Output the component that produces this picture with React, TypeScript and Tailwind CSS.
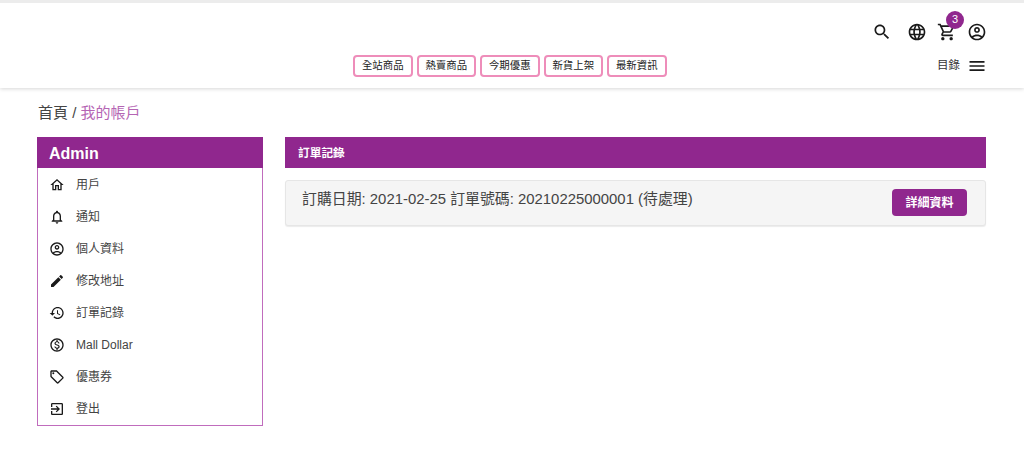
import React from "react";

type IconProps = { d: string; size: number; extra?: React.ReactNode; className?: string };

function Icon({ d, size, extra, className }: IconProps) {
  return (
    <svg width={size} height={size} viewBox="0 0 24 24" fill="#1a1a1a" className={className}>
      <path d={d} />
      {extra}
    </svg>
  );
}

const icons = {
  search: "M15.5 14h-.79l-.28-.27C15.41 12.59 16 11.11 16 9.5 16 5.91 13.09 3 9.5 3S3 5.91 3 9.5 5.91 16 9.5 16c1.61 0 3.09-.59 4.23-1.57l.27.28v.79l5 4.99L20.49 19l-4.99-5zm-6 0C7.01 14 5 11.99 5 9.5S7.01 5 9.5 5 14 7.01 14 9.5 11.99 14 9.5 14z",
  language: "M11.99 2C6.47 2 2 6.48 2 12s4.47 10 9.99 10C17.52 22 22 17.52 22 12S17.52 2 11.99 2zm6.93 6h-2.95c-.32-1.25-.78-2.45-1.38-3.56 1.84.63 3.37 1.91 4.33 3.56zM12 4.04c.83 1.2 1.48 2.53 1.91 3.96h-3.82c.43-1.43 1.08-2.76 1.91-3.96zM4.26 14C4.1 13.36 4 12.69 4 12s.1-1.36.26-2h3.38c-.08.66-.14 1.32-.14 2 0 .68.06 1.34.14 2H4.26zm.82 2h2.95c.32 1.25.78 2.45 1.38 3.56-1.84-.63-3.37-1.9-4.33-3.56zm2.95-8H5.08c.96-1.66 2.49-2.93 4.33-3.56C8.81 5.55 8.35 6.75 8.03 8zM12 19.96c-.83-1.2-1.48-2.53-1.91-3.96h3.82c-.43 1.43-1.08 2.76-1.91 3.96zM14.34 14H9.66c-.09-.66-.16-1.32-.16-2 0-.68.07-1.35.16-2h4.68c.09.65.16 1.32.16 2 0 .68-.07 1.34-.16 2zm.25 5.56c.6-1.11 1.06-2.31 1.38-3.56h2.95c-.96 1.65-2.49 2.93-4.33 3.56zM16.36 14c.08-.66.14-1.32.14-2 0-.68-.06-1.34-.14-2h3.38c.16.64.26 1.31.26 2s-.1 1.36-.26 2h-3.38z",
  cart: "M15.55 13c.75 0 1.41-.41 1.75-1.03l3.58-6.49c.37-.66-.11-1.48-.87-1.48H5.21l-.94-2H1v2h2l3.6 7.59-1.35 2.44C4.52 15.37 5.48 17 7 17h12v-2H7l1.1-2h7.45zM6.16 6h12.15l-2.76 5H8.53L6.16 6zM7 18c-1.1 0-1.99.9-1.99 2S5.9 22 7 22s2-.9 2-2-.9-2-2-2zm10 0c-1.1 0-1.99.9-1.99 2s.89 2 1.99 2 2-.9 2-2-.9-2-2-2z",
  account: "M12 2C6.48 2 2 6.48 2 12s4.48 10 10 10 10-4.48 10-10S17.52 2 12 2zM7.35 18.5C8.66 17.56 10.26 17 12 17s3.34.56 4.65 1.5c-1.31.94-2.91 1.5-4.65 1.5s-3.34-.56-4.65-1.5zm10.79-1.38C16.45 15.8 14.32 15 12 15s-4.45.8-6.14 2.12C4.7 15.73 4 13.95 4 12c0-4.42 3.58-8 8-8s8 3.58 8 8c0 1.95-.7 3.73-1.86 5.12zM12 6c-1.93 0-3.5 1.57-3.5 3.5S10.07 13 12 13s3.5-1.57 3.5-3.5S13.93 6 12 6zm0 5c-.83 0-1.5-.67-1.5-1.5S11.17 8 12 8s1.5.67 1.5 1.5S12.83 11 12 11z",
  menu: "M3 18h18v-2H3v2zm0-5h18v-2H3v2zm0-7v2h18V6H3z",
  home: "M12 5.69l5 4.5V18h-2v-6H9v6H7v-7.81l5-4.5M12 3L2 12h3v8h6v-6h2v6h6v-8h3L12 3z",
  bell: "M12 22c1.1 0 2-.9 2-2h-4c0 1.1.9 2 2 2zm6-6v-5c0-3.07-1.63-5.64-4.5-6.32V4c0-.83-.67-1.5-1.5-1.5s-1.5.67-1.5 1.5v.68C7.64 5.36 6 7.92 6 11v5l-2 2v1h16v-1l-2-2zm-2 1H8v-6c0-2.48 1.51-4.5 4-4.5s4 2.02 4 4.5v6z",
  edit: "M3 17.25V21h3.75L17.81 9.94l-3.75-3.75L3 17.25zM20.71 7.04c.39-.39.39-1.02 0-1.41l-2.34-2.34c-.39-.39-1.02-.39-1.41 0l-1.83 1.83 3.75 3.75 1.83-1.83z",
  history: "M13 3c-4.97 0-9 4.03-9 9H1l3.89 3.89.07.14L9 12H6c0-3.87 3.13-7 7-7s7 3.13 7 7-3.13 7-7 7c-1.93 0-3.68-.79-4.94-2.06l-1.42 1.42C8.27 19.99 10.51 21 13 21c4.97 0 9-4.03 9-9s-4.03-9-9-9zm-1 5v5l4.28 2.54.72-1.21-3.5-2.08V8H12z",
  money: "M12 2C6.48 2 2 6.48 2 12s4.48 10 10 10 10-4.48 10-10S17.52 2 12 2zm0 18c-4.41 0-8-3.59-8-8s3.59-8 8-8 8 3.59 8 8-3.59 8-8 8zm.31-8.86c-1.77-.45-2.34-.94-2.34-1.67 0-.84.79-1.43 2.1-1.43 1.38 0 1.9.66 1.94 1.64h1.71c-.05-1.34-.87-2.57-2.49-2.97V5H10.9v1.69c-1.51.32-2.72 1.3-2.72 2.81 0 1.79 1.49 2.69 3.66 3.21 1.95.46 2.34 1.15 2.34 1.87 0 .53-.39 1.39-2.1 1.39-1.6 0-2.23-.72-2.32-1.64H8.04c.1 1.7 1.36 2.66 2.86 2.97V19h2.34v-1.67c1.52-.29 2.72-1.16 2.73-2.77-.01-2.2-1.9-2.96-3.66-3.42z",
  tag: "M21.41 11.58l-9-9C12.05 2.22 11.55 2 11 2H4c-1.1 0-2 .9-2 2v7c0 .55.22 1.05.59 1.42l9 9c.36.36.86.58 1.41.58s1.05-.22 1.41-.59l7-7c.37-.36.59-.86.59-1.41s-.23-1.06-.59-1.42zM13 20.01L4 11V4h7v-.01l9 8.99-7 7.02z",
  exit: "M10.09 15.59L11.5 17l5-5-5-5-1.41 1.41L12.67 11H3v2h9.67l-2.58 2.59zM19 3H5c-1.11 0-2 .9-2 2v4h2V5h14v14H5v-4H3v4c0 1.1.89 2 2 2h14c1.1 0 2-.9 2-2V5c0-1.1-.9-2-2-2z",
};

const navItems = ["全站商品", "熱賣商品", "今期優惠", "新貨上架", "最新資訊"];

const sideItems: { label: string; d: string; extra?: React.ReactNode }[] = [
  { label: "用戶", d: icons.home },
  { label: "通知", d: icons.bell },
  { label: "個人資料", d: icons.account },
  { label: "修改地址", d: icons.edit },
  { label: "訂單記錄", d: icons.history },
  { label: "Mall Dollar", d: icons.money },
  { label: "優惠券", d: icons.tag, extra: <circle cx="6.5" cy="6.5" r="1.5" /> },
  { label: "登出", d: icons.exit },
];

export default function App() {
  return (
    <div className="h-[462px] w-[1024px] overflow-hidden bg-white font-['Liberation_Sans','Noto_Sans_CJK_TC',sans-serif] text-[#444]">
      <header className="relative h-[88px] border-t-[3px] border-[#ececec] shadow-[0_1px_4px_rgba(0,0,0,0.16)]">
        <div className="flex h-[52px] items-center justify-end pr-[37px] pt-[5px]">
          <Icon d={icons.search} size={20} className="mr-[15px]" />
          <Icon d={icons.language} size={20} className="mr-[10px]" />
          <div className="relative mr-[10px]">
            <Icon d={icons.cart} size={20} />
            <span className="absolute -right-[7px] -top-[11px] flex h-[18px] w-[18px] items-center justify-center rounded-full bg-[#90278e] text-[11px] text-white">
              3
            </span>
          </div>
          <Icon d={icons.account} size={20} />
        </div>
        <div className="relative flex h-[22px] gap-[4px] pl-[353px]">
          {navItems.map((n) => (
            <a
              key={n}
              className="flex h-[22px] w-[59.5px] items-center justify-center rounded-[4px] border-2 border-[#ee8dba] text-[10.4px] text-[#222]"
            >
              {n}
            </a>
          ))}
          <div className="absolute right-[37px] top-0 flex h-[22px] items-center gap-[7px] text-[11.5px] text-[#333]">
            <span>目錄</span>
            <Icon d={icons.menu} size={20} />
          </div>
        </div>
      </header>

      <div className="pl-[38px] pt-[15px] text-[15px] leading-[20px]">
        首頁 / <span className="text-[#b565b4]">我的帳戶</span>
      </div>

      <div className="mt-[14px] flex items-start gap-[22px] pl-[37px]">
        <aside className="w-[226px] border border-t-0 border-[#c06cbd]">
          <div className="-mx-px flex h-[31px] items-center bg-[#90278e] pl-[12px] pt-[2px] text-[16px] font-bold text-white">
            Admin
          </div>
          <ul>
            {sideItems.map((s) => (
              <li key={s.label} className="flex h-[32.12px] items-center pl-[11px] pt-[1px] text-[12px] text-[#444]">
                <Icon d={s.d} size={16} extra={s.extra} className="mr-[11px]" />
                <span>{s.label}</span>
              </li>
            ))}
          </ul>
        </aside>

        <main className="w-[701px]">
          <div className="flex h-[31px] items-center bg-[#90278e] pl-[13px] text-[11.7px] font-bold text-white">
            訂單記錄
          </div>
          <div className="mt-[12px] flex h-[46px] items-center justify-between rounded-[3px] border border-[#e6e6e6] bg-[#f5f5f5] pl-[16px] pr-[18px] shadow-[0_1px_1px_rgba(0,0,0,0.08)]">
            <p className="-mt-[7px] text-[14.9px] text-[#444]">訂購日期: 2021-02-25 訂單號碼: 20210225000001 (待處理)</p>
            <button className="-mt-[1px] h-[27px] w-[75px] rounded-[4px] bg-[#90278e] text-[12px] font-bold text-white">
              詳細資料
            </button>
          </div>
        </main>
      </div>
    </div>
  );
}
